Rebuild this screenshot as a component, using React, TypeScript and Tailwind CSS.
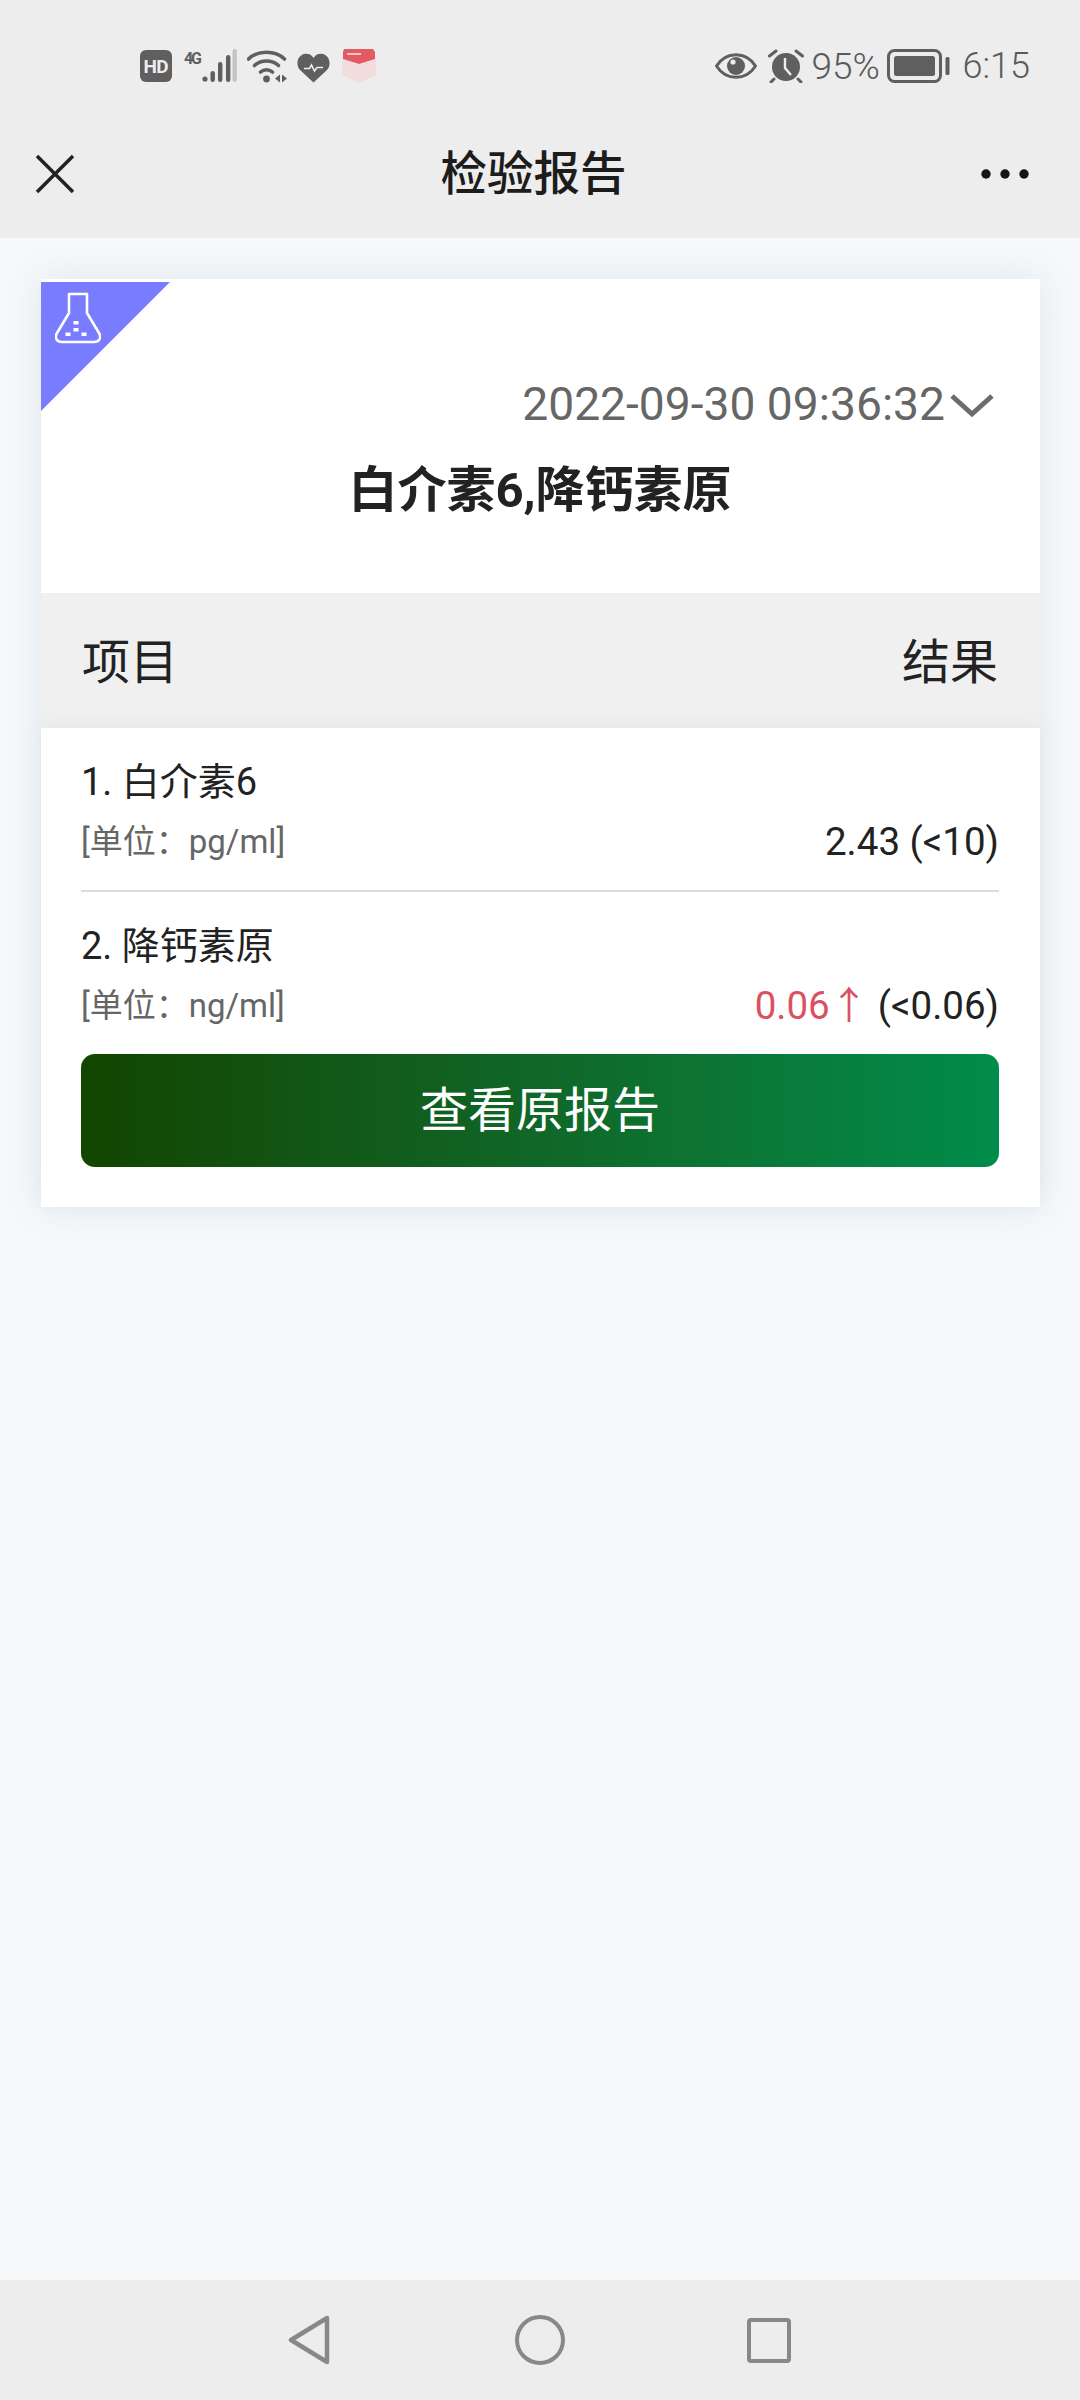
import React from "react";

const FONT = "font-['Roboto','Noto_Sans_CJK_SC',sans-serif]";

function StatusLeft() {
  return (
    <div className="flex items-center">
      <svg width="32" height="32" viewBox="0 0 32 32" className="mr-[12px]">
        <rect width="32" height="32" rx="6" fill="#5f5f5f" />
        <text x="16" y="23" textAnchor="middle" fontSize="19" fontWeight="700" fill="#ededed" fontFamily="Roboto" textLength="25">HD</text>
      </svg>
      <svg width="53" height="34" viewBox="0 0 53 34" className="mr-[10px]">
        <text x="0" y="15" fontSize="16" fontWeight="700" fill="#5f5f5f" fontFamily="Roboto" textLength="18">4G</text>
        <circle cx="21" cy="30" r="2.6" fill="#5f5f5f" />
        <rect x="26.5" y="22" width="4.4" height="11" rx="2.2" fill="#5f5f5f" />
        <rect x="34" y="13" width="4.4" height="20" rx="2.2" fill="#5f5f5f" />
        <rect x="42" y="6" width="4.4" height="27" rx="2.2" fill="#5f5f5f" />
        <rect x="48.5" y="0" width="4.4" height="33" rx="2.2" fill="#c4c4c4" />
      </svg>
      <svg width="41" height="34" viewBox="0 0 41 34" className="mr-[9px]">
        <path d="M1.5 10 C11 1 28 1 37.5 10" fill="none" stroke="#5f5f5f" strokeWidth="3.6" strokeLinecap="round" />
        <path d="M7.5 16.5 C14 10.5 25 10.5 31.5 16.5" fill="none" stroke="#5f5f5f" strokeWidth="3.6" strokeLinecap="round" />
        <path d="M13.5 23 C17 20 22 20 25.5 23" fill="none" stroke="#5f5f5f" strokeWidth="3.6" strokeLinecap="round" />
        <circle cx="19.5" cy="30" r="3.4" fill="#5f5f5f" />
        <path d="M33 25.5 v8 l-5 -4 z M35 25.5 v8 l5 -4 z" fill="#5f5f5f" />
      </svg>
      <svg width="33" height="30" viewBox="0 0 33 30" className="mr-[11px] mt-[4px]">
        <path d="M16.5 29.5 L3 17 C-1.5 12 0 3 7 1 C11 0 14.5 1.5 16.5 5 C18.5 1.5 22 0 26 1 C33 3 34.5 12 30 17 Z" fill="#5f5f5f" />
        <path d="M7 15.5 h5.5 l2 -3.5 l3 6 l2.5 -3.5 h6" fill="none" stroke="#ededed" strokeWidth="1.6" />
      </svg>
      <svg width="36" height="34" viewBox="0 0 36 34" className="blur-[0.5px]">
        <path d="M1 9 L18 16 L35 9 V26 L18 34 L1 26 Z" fill="#f3dcdc" />
        <path d="M3 0 H32 L34 3 V10 L18 15 L2 10 V3 Z" fill="#e45a63" />
        <rect x="6" y="4" width="14" height="2" fill="#f5c6c8" />
      </svg>
    </div>
  );
}

function StatusRight() {
  return (
    <div className={`flex items-center text-[#5a5a5a] ${FONT}`}>
      <svg width="42" height="28" viewBox="0 0 42 28" className="mr-[11px]">
        <path d="M1.5 14 C11 -1 31 -1 40.5 14 C31 29 11 29 1.5 14 Z" fill="none" stroke="#5f5f5f" strokeWidth="3" strokeLinejoin="round" />
        <circle cx="21" cy="14" r="9" fill="#5f5f5f" />
        <circle cx="18" cy="10" r="2.6" fill="#ededed" />
      </svg>
      <svg width="36" height="34" viewBox="0 0 36 34" className="mr-[8px]">
        <circle cx="18" cy="18" r="14" fill="#5f5f5f" />
        <path d="M17 9 V19 L23 26" fill="none" stroke="#ededed" strokeWidth="2.4" />
        <path d="M1.5 7 L8 2 M34.5 7 L28 2 M6 30 L3 33 M30 30 L33 33" stroke="#5f5f5f" strokeWidth="3" strokeLinecap="round" />
      </svg>
      <span className="text-[37px] font-light leading-none w-[75px]">95%</span>
      <svg width="63" height="34" viewBox="0 0 63 34" className="mr-[13px]">
        <rect x="1.5" y="1.5" width="52" height="31" rx="6" fill="none" stroke="#5f5f5f" strokeWidth="3" />
        <rect x="7" y="7" width="41" height="20" rx="2.5" fill="#5f5f5f" />
        <rect x="58.5" y="8" width="4" height="18" rx="1.5" fill="#5f5f5f" />
      </svg>
      <span className="text-[36px] font-light leading-none">6:15</span>
    </div>
  );
}

function Row({ title, unit, children }: { title: string; unit: string; children: React.ReactNode }) {
  return (
    <div className="flex flex-col">
      <div className="text-[38px] leading-[50px] text-[#222222]">{title}</div>
      <div className="flex items-center justify-between mt-[10px] h-[50px]">
        <span className="text-[33px] text-[#666666]">{unit}</span>
        <span className="text-[38.5px] text-[#222222]">{children}</span>
      </div>
    </div>
  );
}

export default function App() {
  return (
    <div className={`w-[1080px] h-[2400px] flex flex-col bg-[#f6f8fa] overflow-hidden ${FONT}`}>
      <header className="h-[238px] shrink-0 bg-[#ededed] flex flex-col">
        <div className="h-[130px] flex items-center justify-between pl-[140px] pr-[50px] pt-[2px]">
          <StatusLeft />
          <StatusRight />
        </div>
        <div className="relative flex items-center justify-between pl-[35px] pr-[50px] h-[88px]">
          <svg width="40" height="40" viewBox="0 0 40 40">
            <path d="M2 2 L38 38 M38 2 L2 38" stroke="#222222" strokeWidth="3.5" />
          </svg>
          <span className="text-[46.5px] font-medium text-[#1c1c1c] leading-none ml-[12px]">检验报告</span>
          <svg width="50" height="12" viewBox="0 0 50 12">
            <circle cx="6" cy="6" r="4.7" fill="#161616" />
            <circle cx="25" cy="6" r="4.7" fill="#161616" />
            <circle cx="44" cy="6" r="4.7" fill="#161616" />
          </svg>
        </div>
      </header>

      <main className="flex-1 pt-[41px] pl-[41px] pr-[40px]">
        <section className="relative bg-white shadow-[0_0_36px_rgba(90,120,140,0.13)]">
          <div className="absolute left-0 top-[3px] w-[129px] h-[129px] bg-[#7a7cff] [clip-path:polygon(0_0,100%_0,0_100%)]">
            <svg width="46" height="52" viewBox="0 0 46 52" className="absolute left-[14px] top-[10px]">
              <path d="M14 2 H32 V21 L44 41 C47 46 44 50 39 50 H7 C2 50 -1 46 2 41 L14 21 Z" fill="none" stroke="#ffffff" strokeWidth="2.6" strokeLinejoin="round" />
              <rect x="18.5" y="29" width="5" height="3.5" fill="#fff" />
              <rect x="18.5" y="36" width="5" height="3.5" fill="#fff" />
              <rect x="10.5" y="40.5" width="5" height="3.5" fill="#fff" />
              <rect x="26.5" y="40.5" width="5" height="3.5" fill="#fff" />
            </svg>
          </div>

          <div className="h-[314px] flex flex-col pt-[90px]">
            <div className="flex items-center justify-end pr-[45px] h-[70px]">
              <span className="text-[46.2px] text-[#666666] leading-none mr-[1px]">2022-09-30 09:36:32</span>
              <svg width="46" height="26" viewBox="0 0 46 26" className="ml-[3px] mt-[4px] blur-[0.6px]">
                <path d="M3 3 L23 21 L43 3" fill="none" stroke="#6c6c6c" strokeWidth="5" />
              </svg>
            </div>
            <div className="text-center text-[49px] font-bold text-[#222222] leading-none mt-[27px] pr-[1px]">白介素6,降钙素原</div>
          </div>

          <div className="h-[135px] bg-[#f0f0f0] flex items-center justify-between pl-[41px] pr-[42px] pt-[5px] text-[48px] text-[#222222]">
            <span>项目</span>
            <span>结果</span>
          </div>

          <div className="relative bg-white pl-[40px] pr-[41px] pt-[29px] pb-[40px] shadow-[0_-4px_16px_rgba(90,120,140,0.07)]">
            <Row title="1. 白介素6" unit="[单位：pg/ml]">2.43 (&lt;10)</Row>
            <div className="h-[2px] bg-[#dcdcdc] mt-[23px] mb-[29px]" />
            <Row title="2. 降钙素原" unit="[单位：ng/ml]">
              <span className="text-[#dc5161]">0.06↑</span>
              <span> (&lt;0.06)</span>
            </Row>
            <button className="mt-[23px] w-full h-[113px] rounded-[14px] bg-gradient-to-r from-[#124500] to-[#008c4a] text-white text-[48px] flex items-center justify-center">
              查看原报告
            </button>
          </div>
        </section>
      </main>

      <footer className="h-[120px] shrink-0 bg-[#ededed] flex items-center pl-[288px]">
        <svg width="42" height="50" viewBox="0 0 42 50">
          <path d="M39 3 V47 L3 25 Z" fill="none" stroke="#888888" strokeWidth="4.5" strokeLinejoin="round" />
        </svg>
        <svg width="50" height="50" viewBox="0 0 50 50" className="ml-[185px]">
          <circle cx="25" cy="25" r="23" fill="none" stroke="#888888" strokeWidth="4" />
        </svg>
        <svg width="44" height="45" viewBox="0 0 44 45" className="ml-[182px]">
          <rect x="2" y="2" width="40" height="41" rx="2" fill="none" stroke="#888888" strokeWidth="4" />
        </svg>
      </footer>
    </div>
  );
}
